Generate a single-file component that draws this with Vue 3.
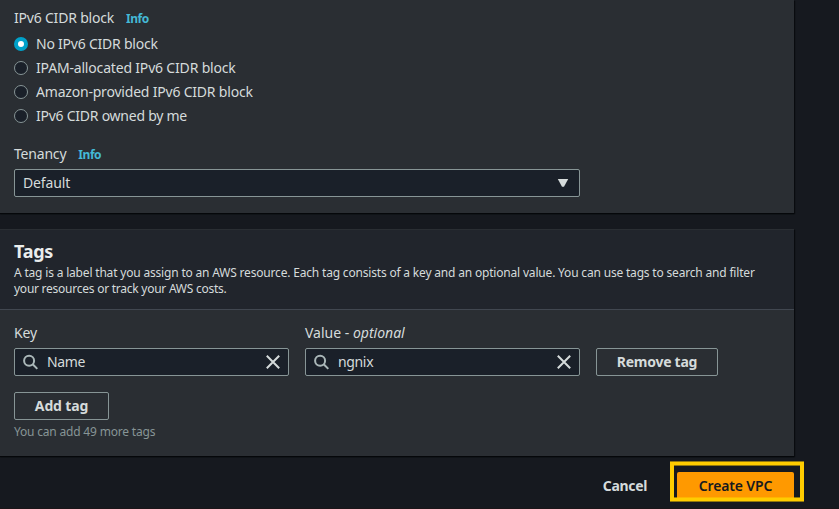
<script setup>
import { ref } from 'vue'

const options = [
  { label: 'No IPv6 CIDR block', cls: 'o1' },
  { label: 'IPAM-allocated IPv6 CIDR block', cls: 'o2' },
  { label: 'Amazon-provided IPv6 CIDR block', cls: 'o3' },
  { label: 'IPv6 CIDR owned by me', cls: 'o4' },
]
const selected = ref(0)
const fields = [
  { label: 'Key', value: 'Name', cls: 'key' },
  { label: 'Value - ', hint: 'optional', value: 'ngnix', cls: 'val' },
]
</script>

<template>
  <main class="page">
    <section class="panel settings">
      <div class="label-row"><span class="t-cidr">IPv6 CIDR block</span><a class="info">Info</a></div>
      <div v-for="(option, i) in options" :key="option.label" class="option" @click="selected = i">
        <span class="radio" :class="{ on: selected === i }"></span>
        <span :class="option.cls">{{ option.label }}</span>
      </div>
      <div class="label-row tenancy"><span class="t-ten">Tenancy</span><a class="info">Info</a></div>
      <div class="box select">
        <span class="t-def">Default</span>
        <svg width="12" height="10" viewBox="0 0 12 10"><path d="M.8 1h10.4L7 8.7H5z" fill="#d5dbdb" /></svg>
      </div>
    </section>

    <section class="panel tags">
      <header class="head">
        <h2><span>Tags</span></h2>
        <p><span class="d1">A tag is a label that you assign to an AWS resource. Each tag consists of a key and an optional value. You can use tags to search and filter</span><br><span class="d2">your resources or track your AWS costs.</span></p>
      </header>
      <div class="body">
        <div class="fields">
          <div v-for="field in fields" :key="field.label" class="field">
            <div class="field-label"><span :class="'l-' + field.cls">{{ field.label }}<em v-if="field.hint">{{ field.hint }}</em></span></div>
            <div class="box search">
              <svg class="lens" width="16" height="16" viewBox="0 0 16 16" fill="none" stroke="#aab7b8" stroke-width="2"><circle cx="6.1" cy="6.7" r="5" /><path d="M9.7 10.3L14.3 14.9" /></svg>
              <span class="value" :class="'v-' + field.cls">{{ field.value }}</span>
              <svg width="14" height="14" viewBox="0 0 14 14" fill="none" stroke="#d5dbdb" stroke-width="2"><path d="M.8.8l12.4 12.4M13.2.8L.8 13.2" /></svg>
            </div>
          </div>
          <button class="btn remove"><span class="b-rem">Remove tag</span></button>
        </div>
        <button class="btn add"><span class="b-add">Add tag</span></button>
        <div class="limit"><span>You can add 49 more tags</span></div>
      </div>
    </section>

    <footer class="actions">
      <button class="cancel"><span class="b-can">Cancel</span></button>
      <div class="highlight">
        <button class="create"><span class="b-cre">Create VPC</span></button>
      </div>
    </footer>
  </main>
</template>

<style>
body { background: #16191f; overflow: hidden; }
</style>

<style scoped>
.page { width: 839px; height: 509px; box-sizing: border-box; overflow: hidden; background: #16191f; color: #d5dbdb; font: 14px/22px "Noto Sans", "Open Sans", sans-serif; border-bottom: 1px solid #1b1518; }
.page *, .page *::before, .page *::after { box-sizing: border-box; }
.panel { width: 794px; background: #2a2e33; box-shadow: 0 1px 1px #05070a, 1px 1px 1px #0b0d11; }
.settings { height: 213px; padding: 7px 14px 0; }
.label-row { display: flex; align-items: center; height: 22px; gap: 12px; margin-bottom: 3px; }
.t-cidr { letter-spacing: -.2px; }
.t-ten { letter-spacing: -.2px; }
.t-def { letter-spacing: -.15px; }
.o1 { letter-spacing: -.23px; }
.o2 { letter-spacing: -.18px; }
.o3 { letter-spacing: -.2px; }
.o4 { letter-spacing: -.25px; }
.d1 { letter-spacing: -.184px; }
.d2 { letter-spacing: -.25px; }
.l-key { letter-spacing: -.2px; }
.v-key, .v-val { letter-spacing: -.35px; }
.b-rem { letter-spacing: -.27px; }
.b-add { letter-spacing: -.15px; }
.b-can { letter-spacing: -.3px; }
.b-cre { letter-spacing: -.15px; font-weight: 600; }
.info { color: #44b9d6; font-size: 12px; font-weight: 700; line-height: 22px; padding-top: 1px; letter-spacing: -.45px; }
.option { display: flex; align-items: center; height: 24px; gap: 8px; }
.radio { width: 14px; height: 14px; flex: none; border: 1px solid #879596; border-radius: 50%; background: #1a2029; }
.radio.on { border: 4px solid #00a1c9; background: #fff; }
.tenancy { margin: 15px 0 4px; }
.box { display: flex; align-items: center; height: 28px; border: 1px solid #879596; border-radius: 2px; background: #1a2029; }
.select { width: 566px; padding: 0 10px 0 8px; justify-content: space-between; }
.tags { height: 227px; margin-top: 16px; border-top: 1px solid #2a2e33; }
.head { height: 80px; padding: 10px 14px 0; background: #21252c; border-bottom: 1px solid #414750; }
h2 { margin: 0; font-size: 18px; line-height: 22px; font-weight: 700; color: #eaeded; letter-spacing: -.25px; }
p { margin: 3px 0 0; font-size: 12px; line-height: 16px; white-space: nowrap; }
.body { padding: 12px 14px 0; }
.fields { display: flex; align-items: flex-end; gap: 16px; }
.field { width: 275px; }
.field-label { height: 22px; margin-bottom: 4px; }
.search { padding: 0 8px; }
.search .value { flex: 1; margin-left: 8px; }
.lens { flex: none; }
.btn { display: flex; align-items: center; justify-content: center; height: 28px; padding: 0; border: 1px solid #879596; border-radius: 2px; background: transparent; color: #d5dbdb; font: 700 14px/22px "Noto Sans", sans-serif; }
.remove { width: 122px; }
.add { width: 95px; margin-top: 16px; }
.limit { margin-top: 4px; font-size: 12px; line-height: 16px; color: #879596; letter-spacing: -.19px; }
.actions { display: flex; align-items: flex-start; height: 52px; padding: 5px 35px 0 0; justify-content: flex-end; }
.cancel { width: 48px; height: 22px; margin: 14px 21px 0 0; padding: 0; border: 0; background: none; color: #d5dbdb; font: 700 14px/22px "Noto Sans", sans-serif; white-space: nowrap; }
.highlight { position: relative; width: 134px; height: 41px; padding: 11px 0 0 7px; overflow: hidden; }
.highlight::after { content: ""; position: absolute; inset: 1px 0; border: solid #fc0; border-width: 3px 4px; box-shadow: 0 1px #fc08, 0 -1px #fc08, inset 0 1px #fc08, inset 0 -1px #fc08; pointer-events: none; }
.create { display: block; width: 117px; height: 28px; padding: 0; border: 0; border-radius: 2px 2px 0 0; background: #f90; color: #16191f; font: 700 14px/28px "Noto Sans", sans-serif; }
span { white-space: nowrap; }
</style>
